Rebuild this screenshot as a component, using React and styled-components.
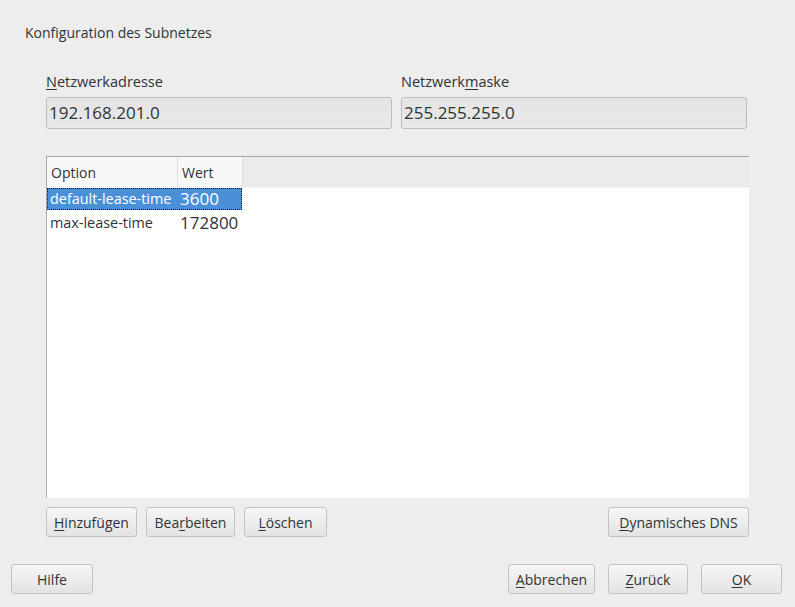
import React from "react";
import styled, { createGlobalStyle } from "styled-components";

const Global = createGlobalStyle`
  html, body { margin: 0; padding: 0; background: #ededed; }
  body { font-family: "Open Sans", "DejaVu Sans", sans-serif; color: #2e3436; }
`;

const Window = styled.div`
  width: 795px;
  height: 607px;
  box-sizing: border-box;
  background: #ededed;
  display: flex;
  flex-direction: column;
`;

const Title = styled.div`
  font-size: 14px;
  padding: 23px 0 0 25px;
  height: 20px;
  line-height: 20px;
`;

const Body = styled.div`
  padding: 0 46px;
  display: flex;
  flex-direction: column;
  flex: 1;
`;

const FieldRow = styled.div`
  display: grid;
  grid-template-columns: 346px 346px;
  column-gap: 9px;
  margin-top: 30px;
`;

const Field = styled.div`
  display: flex;
  flex-direction: column;
`;

const Label = styled.label`
  font-size: 14.5px;
  line-height: 18px;
  height: 18px;
  margin-bottom: 6px;
`;

const U = styled.span`
  text-decoration: underline;
  text-underline-offset: 2px;
`;

const Input = styled.div`
  height: 32px;
  box-sizing: border-box;
  border: 1px solid #bdbdbd;
  border-radius: 3px;
  background: linear-gradient(#e4e4e4, #e9e9e9);
  font-size: 17px;
  line-height: 30px;
  padding-left: 2px;
  color: #2e3436;
`;

const Table = styled.div`
  margin-top: 27px;
  width: 703px;
  height: 342px;
  box-sizing: border-box;
  border-top: 1px solid #a8a8a8;
  border-left: 1px solid #a8a8a8;
  background: #fff;
  display: flex;
  flex-direction: column;
`;

const HeaderRow = styled.div`
  display: flex;
  height: 30px;
  background: #ebebeb;
  border-bottom: 1px solid #f4f4f4;
`;

const HeadCell = styled.div`
  width: ${(p) => p.$w}px;
  box-sizing: border-box;
  background: #f8f8f8;
  border-right: 1px solid #dcdcdc;
  font-size: 14px;
  line-height: 31px;
  padding-left: ${(p) => p.$pl}px;
`;

const Row = styled.div`
  display: flex;
  height: 22px;
  margin-top: ${(p) => (p.$first ? 0 : 2)}px;
  background: ${(p) => (p.$sel ? "#4a90d9" : "transparent")};
  color: ${(p) => (p.$sel ? "#fff" : "#2e3436")};
  width: 195px;
  box-sizing: border-box;
  outline: ${(p) => (p.$sel ? "1px dotted #1a1a1a" : "none")};
  outline-offset: -1px;
`;

const Cell = styled.div`
  width: ${(p) => p.$w}px;
  box-sizing: border-box;
  padding-left: ${(p) => p.$pl}px;
  font-size: ${(p) => p.$fs}px;
  line-height: 22px;
  white-space: nowrap;
`;

const ButtonRow = styled.div`
  display: flex;
  margin-top: 9px;
  gap: 9px;
`;

const Button = styled.button`
  width: ${(p) => p.$w}px;
  height: 30px;
  box-sizing: border-box;
  border: 1px solid #c3c3c3;
  border-radius: 3px;
  background: linear-gradient(#f6f6f6, #e3e3e3);
  font-family: "Open Sans", "DejaVu Sans", sans-serif;
  font-size: 14px;
  color: #2e3436;
  padding: 0;
`;

const Spacer = styled.div`
  flex: 1;
`;

const Footer = styled.div`
  display: flex;
  padding: 0 13px 13px 11px;
  gap: 13px;
`;

export default function App() {
  return (
    <Window>
      <Global />
      <Title>Konfiguration des Subnetzes</Title>
      <Body>
        <FieldRow>
          <Field>
            <Label><U>N</U>etzwerkadresse</Label>
            <Input>192.168.201.0</Input>
          </Field>
          <Field>
            <Label>Netzwerk<U>m</U>aske</Label>
            <Input>255.255.255.0</Input>
          </Field>
        </FieldRow>
        <Table>
          <HeaderRow>
            <HeadCell $w={131} $pl={4}>Option</HeadCell>
            <HeadCell $w={65} $pl={4}>Wert</HeadCell>
          </HeaderRow>
          <Row $sel $first>
            <Cell $w={133} $pl={3} $fs={14.4}>default-lease-time</Cell>
            <Cell $w={62} $pl={0} $fs={17}>3600</Cell>
          </Row>
          <Row>
            <Cell $w={133} $pl={3} $fs={14.4}>max-lease-time</Cell>
            <Cell $w={62} $pl={0} $fs={17}>172800</Cell>
          </Row>
        </Table>
        <ButtonRow>
          <Button $w={91}><U>H</U>inzufügen</Button>
          <Button $w={89}>Bea<U>r</U>beiten</Button>
          <Button $w={83}><U>L</U>öschen</Button>
          <Spacer />
          <Button $w={141}><U>D</U>ynamisches DNS</Button>
        </ButtonRow>
      </Body>
      <Footer>
        <Button $w={82}>Hilfe</Button>
        <Spacer />
        <Button $w={87}><U>A</U>bbrechen</Button>
        <Button $w={80}><U>Z</U>urück</Button>
        <Button $w={81}><U>O</U>K</Button>
      </Footer>
    </Window>
  );
}
